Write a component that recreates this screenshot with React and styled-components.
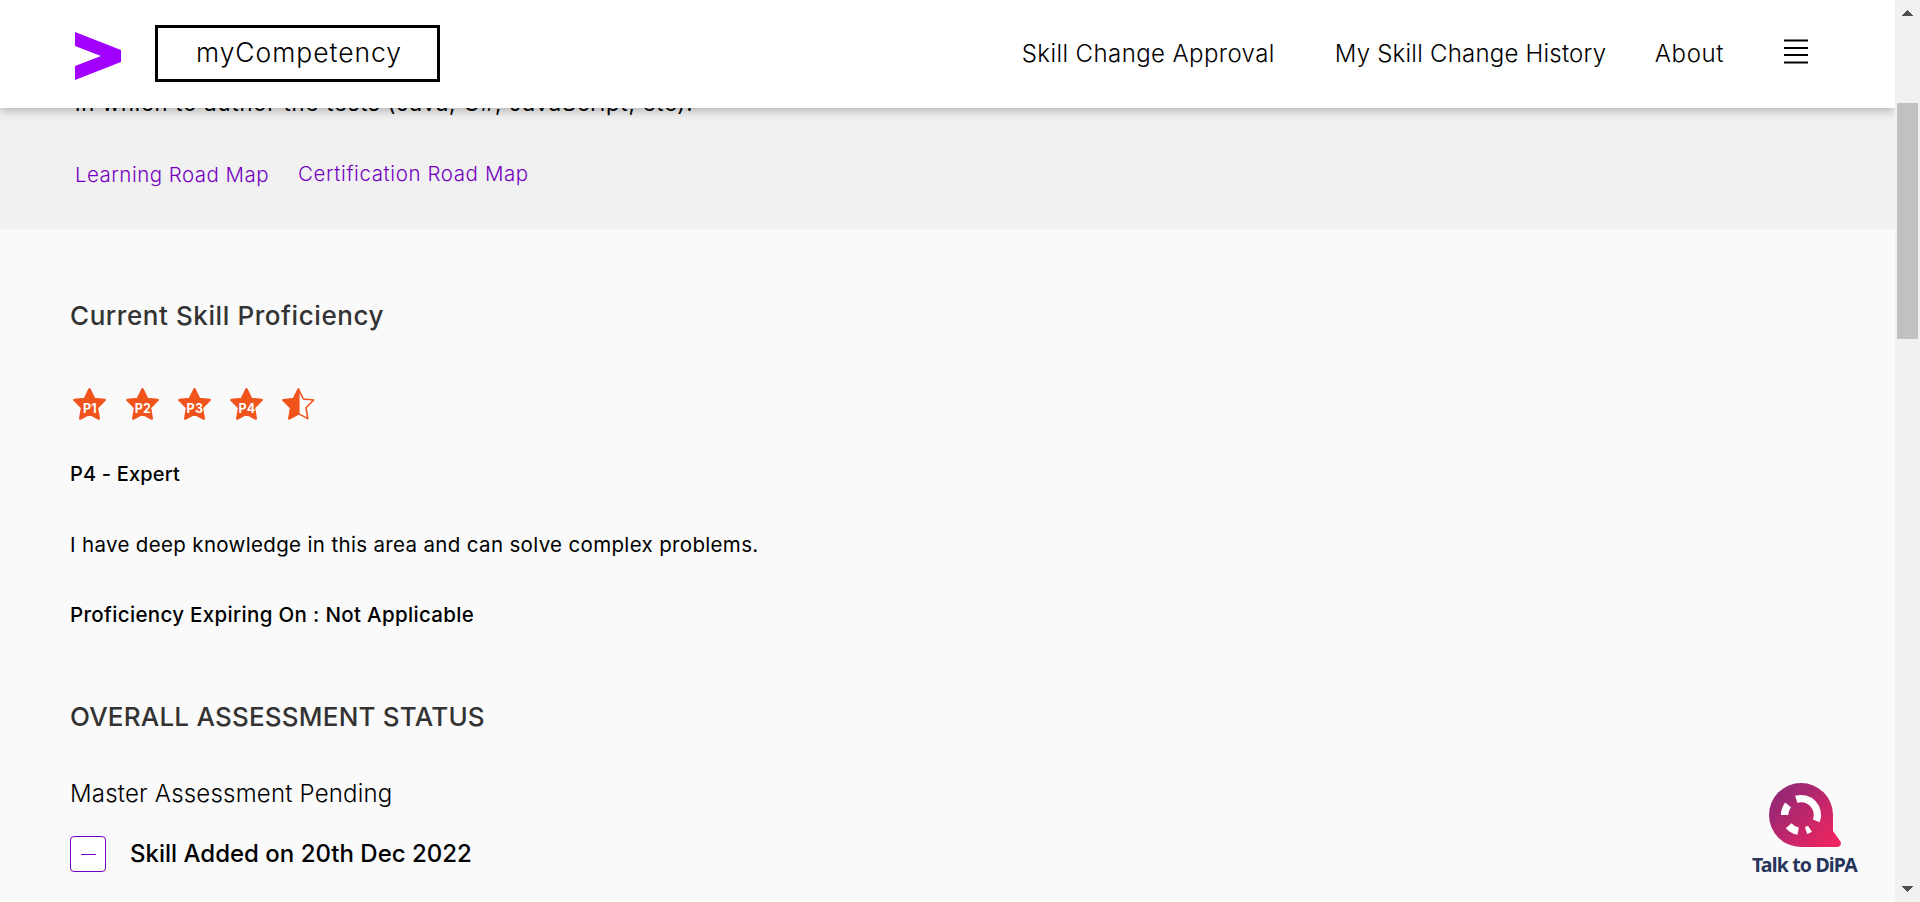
import React from "react";
import styled, { createGlobalStyle } from "styled-components";

const GlobalStyle = createGlobalStyle`
  * { box-sizing: border-box; }
  body { margin: 0; overflow: hidden; font-family: Inter, "Liberation Sans", sans-serif; color: #000; }
  h2, p { margin: 0; }
  svg { display: block; flex: none; }
`;

const Window = styled.div`
  display: flex;
  width: 1920px;
  height: 902px;
`;

const Page = styled.div`
  position: relative;
  flex: 1;
  display: flex;
  flex-direction: column;
  overflow: hidden;
  background: #fafafa;
`;

const Header = styled.header`
  position: relative;
  z-index: 1;
  flex: none;
  display: flex;
  align-items: center;
  height: 108px;
  padding: 0 87px 0 75px;
  background: #fff;
  box-shadow: 0 2px 10px rgba(0, 0, 0, 0.3);
`;

const LogoLink = styled.a`
  display: flex;
  width: 46px;
  margin: 4px 34px 0 0;
`;

const AppName = styled.div`
  width: 285px;
  height: 57px;
  margin-top: -1px;
  padding-left: 38px;
  border: 3px solid #000;
  font-size: 26.5px;
  font-weight: 300;
  line-height: 49px;
  letter-spacing: 0.95px;
  white-space: nowrap;
`;

const Nav = styled.nav`
  display: flex;
  align-items: center;
  margin-left: auto;
`;

const NavLink = styled.a`
  margin-right: ${(p) => p.$gap}px;
  font-size: 24px;
  font-weight: 300;
  line-height: 30px;
  letter-spacing: ${(p) => p.$tracking}px;
  white-space: nowrap;
`;

const MenuButton = styled.button`
  display: flex;
  width: 24px;
  height: 25px;
  margin-top: -5px;
  padding: 0;
  border: 0;
  background: none;
`;

const Summary = styled.section`
  flex: none;
  height: 121px;
  padding-left: 75px;
  background: #f1f1f1;
`;

const SummaryText = styled.p`
  margin-top: -17px;
  font-size: 22px;
  line-height: 24px;
  letter-spacing: 0.86px;
`;

const RoadMaps = styled.div`
  display: flex;
  align-items: flex-start;
  gap: 29px;
  margin-top: 48px;
`;

const RoadMapLink = styled.a`
  margin-top: ${(p) => p.$lift || 0}px;
  color: #7500c0;
  font-size: 20.5px;
  font-weight: 300;
  line-height: 24px;
  letter-spacing: ${(p) => p.$tracking}px;
`;

const Content = styled.main`
  display: flex;
  flex-direction: column;
  align-items: flex-start;
  padding: 71px 0 0 70px;
`;

const Heading = styled.h2`
  margin-top: ${(p) => p.$top || 0}px;
  color: #333;
  font-size: 26px;
  font-weight: 500;
  line-height: 32px;
  letter-spacing: ${(p) => p.$tracking}px;
`;

const Rating = styled.div`
  display: flex;
  gap: 19.2px;
  margin: 56px 0 0 3.4px;
`;

const Level = styled.p`
  margin-top: 42px;
  font-size: 20px;
  font-weight: 500;
  line-height: 24px;
  letter-spacing: 0.17px;
`;

const Description = styled.p`
  margin-top: 47px;
  font-size: 20.5px;
  line-height: 24px;
  letter-spacing: 0.34px;
`;

const Expiry = styled.p`
  margin-top: 46px;
  font-size: 20.5px;
  font-weight: 500;
  line-height: 24px;
  letter-spacing: 0.33px;
`;

const Status = styled.p`
  margin-top: 47px;
  font-size: 24px;
  font-weight: 300;
  line-height: 28px;
  letter-spacing: 0.2px;
`;

const HistoryRow = styled.div`
  display: flex;
  align-items: center;
  gap: 24px;
  margin-top: 28px;
`;

const Toggle = styled.button`
  display: flex;
  align-items: center;
  justify-content: center;
  width: 36px;
  height: 36px;
  padding: 0;
  border: 1px solid #7500c0;
  border-radius: 4px;
  background: #fff;
`;

const Dash = styled.span`
  width: 15px;
  height: 1px;
  background: #7500c0;
`;

const HistoryTitle = styled.span`
  padding-bottom: 1px;
  font-size: 24px;
  font-weight: 500;
  line-height: 28px;
`;

const Assistant = styled.div`
  position: absolute;
  right: 36px;
  bottom: 24px;
  display: flex;
  flex-direction: column;
  align-items: flex-start;
  width: 107px;
`;

const AssistantLabel = styled.span`
  margin: 5px 0 1px;
  color: #26355c;
  font-family: "Noto Sans", sans-serif;
  font-size: 19.5px;
  font-weight: 700;
  line-height: 25px;
  letter-spacing: -0.83px;
  white-space: nowrap;
`;

const BubbleBox = styled.div`
  margin-left: 17px;
`;

const ScrollTrack = styled.div`
  display: flex;
  flex-direction: column;
  align-items: center;
  width: 25px;
  padding-top: 10px;
  background: #f1f1f1;
`;

const ScrollThumb = styled.div`
  width: 21px;
  height: 236px;
  margin: 87px 0 547px;
  background: #c1c1c1;
`;

const STAR = "M16.5 1.3 L21.3 11 L31.7 12 L24 19.7 L25.8 30.6 L16.5 25.6 L7.2 30.6 L9 19.7 L1.3 12 L11.7 11 Z";

function Star({ label }) {
  return (
    <svg width="33" height="32" viewBox="0 0 33 32">
      <path d={STAR} fill="#f0531c" stroke="#f0531c" strokeWidth="2.4" strokeLinejoin="round" />
      <text x="16.9" y="25" textAnchor="middle" fill="#fff" fontSize="12.5" fontWeight="700" letterSpacing="0.2">
        {label}
      </text>
    </svg>
  );
}

function HalfStar() {
  return (
    <svg width="33" height="32" viewBox="0 0 33 32">
      <path d={STAR} fill="#fff" stroke="#f0531c" strokeWidth="1.6" strokeLinejoin="round" />
      <path d="M16.5 1.3 V25.6 L7.2 30.6 L9 19.7 L1.3 12 L11.7 11 Z" fill="#f0531c" stroke="#f0531c" strokeWidth="2.2" strokeLinejoin="round" />
    </svg>
  );
}

function arc(from, to) {
  const at = (deg) => {
    const a = (deg * Math.PI) / 180;
    return `${(32 + 16.4 * Math.cos(a)).toFixed(2)} ${(32 + 16.4 * Math.sin(a)).toFixed(2)}`;
  };
  return `M${at(from)} A16.4 16.4 0 0 1 ${at(to)}`;
}

const RING = [[-107, 21], [180, 218], [100, 139], [57, 72]];

function Bubble() {
  return (
    <svg width="73" height="64" viewBox="0 0 73 64">
      <defs>
        <linearGradient id="bubble" gradientUnits="userSpaceOnUse" x1="6" y1="8" x2="62" y2="62">
          <stop offset="0" stopColor="#8f2877" />
          <stop offset="1" stopColor="#ee2560" />
        </linearGradient>
      </defs>
      <path d="M32 0 A32 32 0 0 1 64 32 V48 L71.2 58 Q72.6 60.5 71.2 62.5 Q70 64 67.5 64 H32 A32 32 0 0 1 32 0 Z" fill="url(#bubble)" />
      {RING.map(([from, to]) => (
        <path key={from} d={arc(from, to)} fill="none" stroke="#fff" strokeWidth="7.4" />
      ))}
    </svg>
  );
}

function Arrow({ down }) {
  return (
    <svg width="11" height="6" viewBox="0 0 11 6" shapeRendering="crispEdges">
      <path d={down ? "M0 0 H11 L5.5 6 Z" : "M0 6 H11 L5.5 0 Z"} fill="#505050" />
    </svg>
  );
}

export default function App() {
  return (
    <Window>
      <GlobalStyle />
      <Page>
        <Header>
          <LogoLink>
            <svg width="46" height="48" viewBox="0 0 46 48">
              <path d="M0 0 L46 18 V30 L0 48 V34 L26 24 L0 14 Z" fill="#a100ff" />
            </svg>
          </LogoLink>
          <AppName>myCompetency</AppName>
          <Nav>
            <NavLink $gap={60} $tracking={0.41}>Skill Change Approval</NavLink>
            <NavLink $gap={48.5} $tracking={0.22}>My Skill Change History</NavLink>
            <NavLink $gap={60} $tracking={0.6}>About</NavLink>
            <MenuButton aria-label="Menu">
              <svg width="24" height="25" viewBox="0 0 24 25">
                <path d="M0 1.5 H24 M0 8.9 H24 M0 16 H24 M0 23.4 H24" stroke="#000" strokeWidth="2" />
              </svg>
            </MenuButton>
          </Nav>
        </Header>
        <Summary>
          <SummaryText>in which to author the tests (Java, C#, JavaScript, etc).</SummaryText>
          <RoadMaps>
            <RoadMapLink $tracking={0.47}>Learning Road Map</RoadMapLink>
            <RoadMapLink $tracking={0.6} $lift={-1}>Certification Road Map</RoadMapLink>
          </RoadMaps>
        </Summary>
        <Content>
          <Heading $tracking={0.58}>Current Skill Proficiency</Heading>
          <Rating>
            <Star label="P1" />
            <Star label="P2" />
            <Star label="P3" />
            <Star label="P4" />
            <HalfStar />
          </Rating>
          <Level>P4 - Expert</Level>
          <Description>I have deep knowledge in this area and can solve complex problems.</Description>
          <Expiry>Proficiency Expiring On : Not Applicable</Expiry>
          <Heading $top={74} $tracking={0.21}>OVERALL ASSESSMENT STATUS</Heading>
          <Status>Master Assessment Pending</Status>
          <HistoryRow>
            <Toggle aria-label="Collapse">
              <Dash />
            </Toggle>
            <HistoryTitle>Skill Added on 20th Dec 2022</HistoryTitle>
          </HistoryRow>
        </Content>
        <Assistant>
          <BubbleBox>
            <Bubble />
          </BubbleBox>
          <AssistantLabel>Talk to DiPA</AssistantLabel>
        </Assistant>
      </Page>
      <ScrollTrack>
        <Arrow />
        <ScrollThumb />
        <Arrow down />
      </ScrollTrack>
    </Window>
  );
}
